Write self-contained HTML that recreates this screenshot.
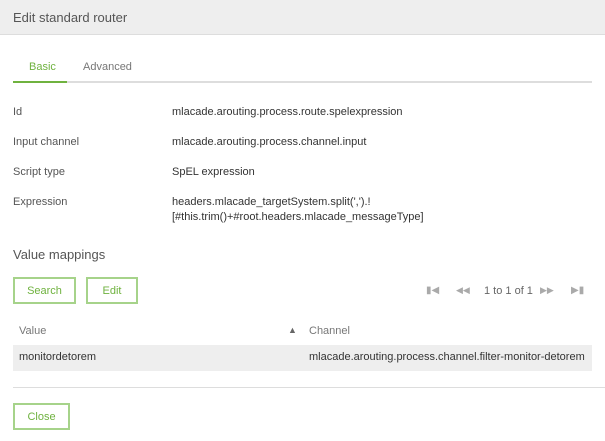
<!DOCTYPE html>
<html><head><style>
*{margin:0;padding:0;box-sizing:border-box}
body{width:605px;height:441px;background:#fff;font-family:"Liberation Sans",sans-serif;font-size:11px;color:#333;position:relative;overflow:hidden}
.a{position:absolute;white-space:nowrap}
.hdr{left:0;top:0;width:605px;height:35px;background:#eeeeee;border-bottom:1px solid #ddd}
.btn{position:absolute;border:2px solid #a6d38a;color:#6fb23f;text-align:center;line-height:25px;height:27px}
.lbl{color:#555;left:13px}
.g{color:#aaa}
</style></head><body>
<div class="a hdr"></div>
<div class="a" style="left:13px;top:10px;font-size:13px;color:#555">Edit standard router</div>
<div class="a" style="left:13px;top:81px;width:579px;height:2px;background:#ddd"></div>
<div class="a" style="left:13px;top:81px;width:54px;height:2px;background:#6fb23f"></div>
<div class="a" style="left:29px;top:61px;color:#6fb23f">Basic</div>
<div class="a" style="left:83px;top:61px;color:#777">Advanced</div>
<div class="a lbl" style="top:106px">Id</div>
<div class="a" style="left:172px;top:106px">mlacade.arouting.process.route.spelexpression</div>
<div class="a lbl" style="top:136px">Input channel</div>
<div class="a" style="left:172px;top:136px">mlacade.arouting.process.channel.input</div>
<div class="a lbl" style="top:166px">Script type</div>
<div class="a" style="left:172px;top:166px">SpEL expression</div>
<div class="a lbl" style="top:196px">Expression</div>
<div class="a" style="left:172px;top:196px">headers.mlacade_targetSystem.split(',').!</div>
<div class="a" style="left:172px;top:211px">[#this.trim()+#root.headers.mlacade_messageType]</div>
<div class="a" style="left:13px;top:247px;font-size:13px;color:#555">Value mappings</div>
<div class="btn" style="left:13px;top:277px;width:63px">Search</div>
<div class="btn" style="left:86px;top:277px;width:52px">Edit</div>
<div class="a g" style="left:426px;top:285px;font-size:10px">&#9646;&#9664;</div>
<div class="a g" style="left:456px;top:285px;font-size:9px">&#9664;&#9664;</div>
<div class="a" style="left:484px;top:285px;color:#666">1 to 1 of 1</div>
<div class="a g" style="left:540px;top:285px;font-size:9px">&#9654;&#9654;</div>
<div class="a g" style="left:571px;top:285px;font-size:10px">&#9654;&#9646;</div>
<div class="a" style="left:19px;top:325px;color:#777">Value</div>
<div class="a" style="left:288px;top:325px;color:#666;font-size:9px">&#9650;</div>
<div class="a" style="left:309px;top:325px;color:#777">Channel</div>
<div class="a" style="left:13px;top:345px;width:579px;height:26px;background:#eeeeee"></div>
<div class="a" style="left:19px;top:351px">monitordetorem</div>
<div class="a" style="left:309px;top:351px">mlacade.arouting.process.channel.filter-monitor-detorem</div>
<div class="a" style="left:13px;top:387px;width:592px;height:1px;background:#ddd"></div>
<div class="btn" style="left:13px;top:403px;width:57px">Close</div>
</body></html>
